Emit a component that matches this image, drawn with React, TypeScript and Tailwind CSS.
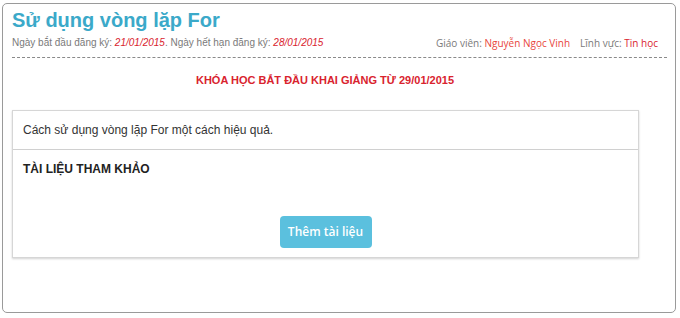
export default function App() {
  return (
    <div className="w-[680px] h-[318px] bg-white pt-[3px] pl-[2px]" style={{ fontFamily: '"Liberation Sans", Arial, sans-serif' }}>
      <div className="w-[674px] h-[310px] border border-[#9a9a9a] rounded-[5px] pl-[9px] pr-[8px]">
        {/* Tiêu đề */}
        <h1 className="text-[20px] leading-[24px] font-bold text-[#3ba9c9] mt-[4px]">Sử dụng vòng lặp For</h1>

        <div className="flex items-center justify-between text-[10px] leading-[14px] mt-[4px] text-[#7a7a7a]">
          <div>
            Ngày bắt đầu đăng ký: <i className="text-[#d9232e]">21/01/2015</i>. Ngày hết hạn đăng ký:{' '}
            <i className="text-[#d9232e]">28/01/2015</i>
          </div>
          <div className="pr-[9px]" style={{ fontFamily: '"Open Sans", sans-serif' }}>
            Giáo viên: <span className="text-[#e8453c]">Nguyễn Ngọc Vinh</span>
            <span className="ml-[10px]">Lĩnh vực:</span> <span className="text-[#d9232e]">Tin học</span>
          </div>
        </div>

        <div className="border-t border-dashed border-[#8a8a8a] mt-[7px]" />

        <div className="w-[626px] text-center text-[11px] font-bold text-[#d9232e] mt-[15px] leading-[14px]">
          KHÓA HỌC BẮT ĐẦU KHAI GIẢNG TỪ 29/01/2015
        </div>

        {/* Card nội dung */}
        <div className="w-[627px] mt-[23px] border border-[#d6d6d6] shadow-[0_1px_2px_rgba(0,0,0,0.18)]">
          <div className="px-[10px] h-[38px] flex items-center text-[12px] text-[#333]">
            Cách sử dụng vòng lặp For một cách hiệu quả.
          </div>
          <div className="border-t border-[#d0d0d0] px-[10px] pt-[10px] pb-[9px]">
            <div className="text-[12px] font-bold text-[#222]">TÀI LIỆU THAM KHẢO</div>
            <div className="flex justify-center mt-[38px]">
              <button
                className="w-[92px] h-[32px] rounded-[4px] bg-[#5bc0de] text-white text-[12px] font-semibold"
                style={{ fontFamily: '"Open Sans", sans-serif' }}
              >
                Thêm tài liệu
              </button>
            </div>
          </div>
        </div>
      </div>
    </div>
  )
}
